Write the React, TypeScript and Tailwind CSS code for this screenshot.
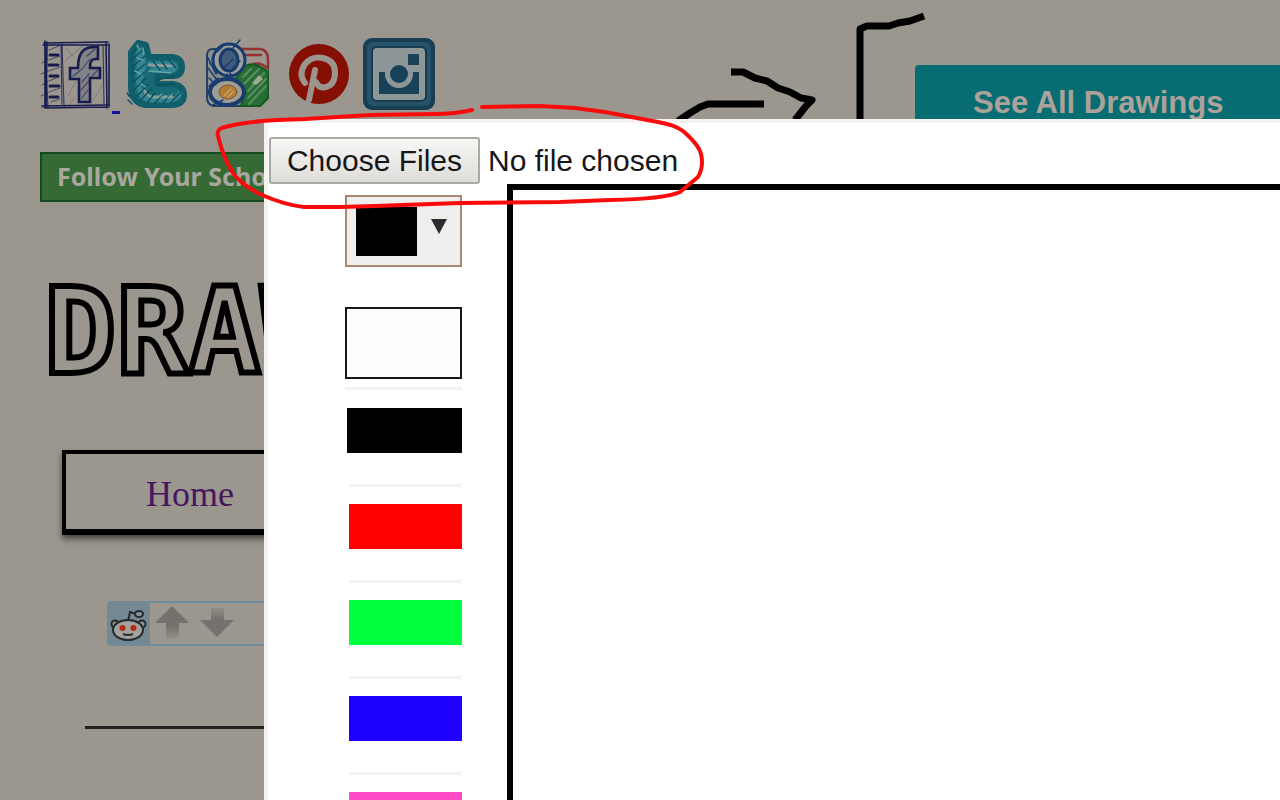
import { useRef, useState } from "react";

function FacebookSketch() {
  return (
    <svg viewBox="0 0 72 72" className="h-[72px] w-[72px]" fill="none" stroke="#171c4f" strokeLinecap="round">
      <path d="M4 5 68 4M3 7 69 7M5 3 5 70M7 4 6 69M2 68 68 67M5 70 67 69M66 4 67 70M69 6 69 69" strokeWidth="1.6" />
      <path d="M5 6 8 70M22 6 24 68M21 8 22 66M63 8 64 66" strokeWidth="1.1" opacity=".8" />
      <path d="M10 17h8M9 27h9M10 38h8M10 48h9M10 59h8" strokeWidth="3" />
      <path d="M2 25l6-4M1 36l7-3M2 47l6-4M1 58l7-3M2 70l6-4M9 12l10-4M9 22l11-4M9 33l11-4M9 43l10-4M9 54l11-4M11 64l9-3" strokeWidth="1" opacity=".65" />
      <path d="M26 10 33 18M26 22 44 7M28 58 36 43M52 64 64 45M30 66l4-6" strokeWidth="1" opacity=".25" />
      <path d="M39 64V41H30V30h8c0-14 4-22 20-21v12c-7-1-8 3-8 9h10v10H50v24z" strokeWidth="2.6" fill="#838188" />
      <path d="M42 60l6-8M41 52l8-9M42 44l7-8M33 38l8-6M42 31l8-10M47 18l8-7M52 38l6-6" strokeWidth="1.2" opacity=".6" />
    </svg>
  );
}

function TwitterSketch() {
  return (
    <svg viewBox="0 0 62 72" className="h-[72px] w-[62px]" fill="none" strokeLinecap="round" strokeLinejoin="round">
      <path d="M5 14 12 5 20 7 23 19H46Q56 20 56 29T47 38H31Q29 44 34 46H47Q58 48 58 57T47 67H20Q6 65 5 50z" fill="#176a76" stroke="#125d6b" strokeWidth="6" />
      <path d="M13 10v40q2 11 12 12h20q8-2 8-6M24 26h22q6 3 1 6H27M15 15q5 12 0 24" stroke="#358590" strokeWidth="5" />
      <path d="M18 52q3 7 10 7h18M23 27l22 1" stroke="#8a9b98" strokeWidth="3" />
      <path d="M6 15l8-6M5 22l11-9M6 29l13-11M6 37l13-11M7 44l12-10M7 53l13-13M10 59l12-12M14 63l12-13M21 65l8-10M29 65l8-9M37 65l9-10M45 64l9-9M27 23l7 9M35 22l6 9M43 22l7 8M31 42l17-4M30 47l18-1M6 66l-4-4M4 59l-3-4" stroke="#0a5060" strokeWidth="1.4" />
      <path d="M11 7l2 4M17 10l1 6M11 20l6 2M9 33l6 3M15 46l5 3M23 33l22 2M32 60l4-4M42 60l4-4" stroke="#62a4a8" strokeWidth="1.4" />
    </svg>
  );
}

function GoogleSketch() {
  return (
    <svg viewBox="0 0 66 72" className="h-[72px] w-[66px]" fill="none" strokeLinecap="round">
      <path d="M8 11H55q8 2 8 9V60l-8 8H8q-6-2-6-8V16q1-5 6-5z" fill="#89908e" stroke="#263f63" strokeWidth="2" />
      <path d="M38 12h20q5 2 5 9v14L50 26 38 26z" fill="#9b958e" />
      <path d="M36 11h20q7 2 7 11v8M38 17h18M48 26q8-2 14 4" stroke="#942f32" strokeWidth="2.4" />
      <path d="M37 30q12-9 26 4v26l-8 8H36l4-14-9-14z" fill="#276d36" stroke="#125c24" strokeWidth="2" />
      <path d="M38 39l8-8M38 47l16-16M43 53l16-18M43 60l18-19M44 66l17-18" stroke="#5c8d60" strokeWidth="2" />
      <path d="M47 45 54 37 58 41 51 47z" fill="#9cab94" />
      <ellipse cx="24" cy="22" rx="16" ry="16" fill="#9b9e9d" stroke="#153b70" strokeWidth="3" />
      <ellipse cx="24" cy="22" rx="9" ry="11" fill="#415c7a" stroke="#183a68" strokeWidth="3" />
      <ellipse cx="22" cy="54" rx="17" ry="13" fill="#a09d92" stroke="#183c6e" strokeWidth="4" />
      <ellipse cx="23" cy="54" rx="9" ry="7" fill="#b17b33" stroke="#765b36" strokeWidth="1" />
      <path d="M22 36l8 8M25 35l6 8M2 18l9 18M3 30l9 12M4 48l9-8M5 25l7 10M28 10l7-8M8 67l10-5M15 19l7-8M19 30l9-9M28 30l7-7M12 14l6-6M4 40l7 7M6 61l9 6" stroke="#173c72" strokeWidth="1.5" />
      <path d="M19 58l7-7M23 59l6-6" stroke="#d0a464" strokeWidth="1.4" />
    </svg>
  );
}

function PinterestLogo() {
  return (
    <svg viewBox="0 0 62 62" className="h-[62px] w-[62px]" fill="none" stroke="#9c958d" strokeLinecap="round">
      <circle cx="31" cy="31" r="30" fill="#860f04" stroke="none" />
      <path d="M17 40Q10 31 17 21 24 13 35 15 47 18 47 29 47 42 38 44 31 46 28 39" strokeWidth="6" />
      <path d="M27 27 21 57" strokeWidth="6" />
    </svg>
  );
}

function InstagramLogo() {
  return (
    <svg viewBox="0 0 72 72" className="h-[72px] w-[72px]">
      <rect width="72" height="72" rx="9" fill="#173e53" />
      <rect x="4" y="4" width="64" height="64" rx="6" fill="#24536b" />
      <rect x="9" y="9" width="54" height="54" rx="5" fill="#8d9798" stroke="#183c4e" strokeWidth="2" />
      <path d="M16 34h40v22H16z" fill="#174258" />
      <circle cx="36" cy="36" r="14" fill="#8d9798" />
      <circle cx="36" cy="36" r="9" fill="#174258" />
      <rect x="45" y="16" width="11" height="11" fill="#174258" />
    </svg>
  );
}

function Doodle() {
  return (
    <svg viewBox="0 0 260 124" className="absolute left-[670px] top-0 h-[124px] w-[260px]" fill="none" stroke="#000" strokeWidth="7" strokeLinejoin="round">
      <path d="M8 121 20 113 30 107 38 104H94" />
      <path d="M61 72H73L85 78 97 81 108 88 120 92 131 98 142 100 136 106 125 120" />
      <path d="M190 122V29L197 26H219L228 23 240 21 254 16" />
    </svg>
  );
}

function RedditAlien() {
  return (
    <svg viewBox="0 0 40 40" className="h-10 w-10" fill="none" stroke="#262b2e" strokeWidth="2">
      <path d="M19 17 21 8 28 10" />
      <ellipse cx="30" cy="10" rx="4" ry="3" fill="#899397" />
      <circle cx="6" cy="20" r="3.5" fill="#899397" />
      <circle cx="33" cy="20" r="3.5" fill="#899397" />
      <ellipse cx="19" cy="26" rx="15" ry="10" fill="#a4a29c" />
      <circle cx="13.500" cy="24" r="3" fill="#b32b10" stroke="none" />
      <circle cx="24.500" cy="24" r="3" fill="#b32b10" stroke="none" />
      <path d="M14 30q5 2 10 0" />
    </svg>
  );
}

function VoteArrow({ down = false }: { down?: boolean }) {
  const id = down ? "fade-down" : "fade-up";
  return (
    <svg viewBox="0 0 36 36" className="h-9 w-9">
      <defs>
        <linearGradient id={id} x1="0" y1="0" x2="0" y2="1">
          <stop offset={down ? "0" : ".6"} stopColor={down ? "#918e87" : "#73726d"} />
          <stop offset={down ? ".4" : "1"} stopColor={down ? "#73726d" : "#918e87"} />
        </linearGradient>
      </defs>
      <path d={down ? "M12 2h13v12h10L18 31 1 14h11z" : "M18 0 35 17H25v15H12V17H1z"} fill={`url(#${id})`} />
    </svg>
  );
}

const swatches = [
  { name: "Red", fill: "bg-[#ff0000]" },
  { name: "Green", fill: "bg-[#00ff3c]" },
  { name: "Blue", fill: "bg-[#1d00ff]" },
  { name: "Pink", fill: "bg-[#ff4bc8]" },
];

export default function App() {
  const fileRef = useRef<HTMLInputElement>(null);
  const [fileName, setFileName] = useState("No file chosen");

  return (
    <div className="relative h-screen overflow-hidden bg-[#9b978f] font-['Liberation_Sans',sans-serif]">
      <header className="flex items-start">
        <nav className="flex w-[915px] shrink-0 items-center pl-10 pt-[38px]" aria-label="Social">
          <a href="#facebook" aria-label="Facebook"><FacebookSketch /></a>
          <span className="mt-1 h-[3px] w-2 translate-y-9 bg-[#10109c]" />
          <a href="#twitter" aria-label="Twitter" className="ml-[6px]"><TwitterSketch /></a>
          <a href="#google" aria-label="Google" className="ml-[17px]"><GoogleSketch /></a>
          <a href="#pinterest" aria-label="Pinterest" className="ml-[17px]"><PinterestLogo /></a>
          <a href="#instagram" aria-label="Instagram" className="ml-[13px]"><InstagramLogo /></a>
        </nav>
        <a href="#drawings" className="mt-[65px] h-[87px] flex-1 whitespace-nowrap rounded-tl bg-[#076d73] pl-[58px] pt-5 text-[31px] font-bold leading-9 text-[#aca299]">
          See All Drawings
        </a>
      </header>
      <Doodle />

      <main>
        <a href="#follow" className="ml-10 flex h-[50px] w-80 items-center whitespace-nowrap border-2 border-[#124b20] bg-[#356a35] pl-[15px] font-['Noto_Sans',sans-serif] text-[25px] font-bold text-[#aaa79f]">
          Follow Your School
        </a>
        <h1 className="ml-[44px] mt-[70px] h-[120px] whitespace-nowrap font-['DejaVu_Sans_Mono',monospace] text-[120px] font-bold leading-[120px] text-transparent [-webkit-text-stroke:6px_#000]">
          DRAW
        </h1>
        <nav className="ml-[62px] mt-[58px] flex h-[85px] w-96 items-center border-x-4 border-b-[6px] border-t-4 border-black pl-20 pt-1 shadow-[0_4px_6px_#0008]">
          <a href="#home" className="font-['Liberation_Serif',serif] text-[36px] text-[#46165e]">Home</a>
        </nav>
        <div className="ml-[107px] mt-[66px] flex h-[45px] w-60 items-center rounded border-2 border-[#728b98]">
          <span className="flex h-full w-[41px] items-center bg-[#758995]"><RedditAlien /></span>
          <button type="button" aria-label="Upvote" className="ml-1"><VoteArrow /></button>
          <button type="button" aria-label="Downvote" className="ml-[9px]"><VoteArrow down /></button>
        </div>
        <hr className="ml-[85px] mt-20 w-96 border-t-[3px] border-[#20201e]" />
      </main>

      <section role="dialog" aria-label="Drawing board" className="absolute bottom-0 left-[264px] right-0 top-[119px] flex flex-col overflow-hidden rounded-tl border-l-4 border-t-4 border-[#f4f3f1] bg-white">
        <div className="flex shrink-0 items-center pt-[14px]">
          <button type="button" onClick={() => fileRef.current?.click()} className="ml-px h-[47px] w-[211px] whitespace-nowrap rounded-[3px] border-2 border-[#aaa9a3] bg-linear-to-b from-[#f7f7f6] to-[#deddd9] text-[30px] leading-10 text-[#171719]">
            Choose Files
          </button>
          <input ref={fileRef} type="file" multiple aria-label="Choose files" className="hidden" onChange={(e) => setFileName(e.target.files?.[0]?.name ?? "No file chosen")} />
          <span className="ml-2 text-[30px] leading-10 text-[#171719]">{fileName}</span>
        </div>
        <div className="flex min-h-0 flex-1">
          <div className="flex w-[239px] shrink-0 flex-col items-end overflow-hidden pr-[45px] pt-[11px]">
            <button type="button" aria-label="Pick a colour" aria-haspopup="listbox" className="flex h-[72px] w-[117px] shrink-0 items-center gap-[14px] border-2 border-[#a98772] bg-[#efeeec] pl-[9px]">
              <span className="h-[49px] w-[61px] bg-black" />
              <svg viewBox="0 0 16 16" className="-mt-2 h-4 w-4"><path d="M0 0h16L8 15z" fill="#292d31" /></svg>
            </button>
            <button type="button" aria-label="White" className="mt-10 h-[72px] w-[117px] shrink-0 border-2 border-[#151617] bg-[#fefdfc]" />
            <div className="mt-2 h-[3px] w-[117px] shrink-0 bg-[#f3f3f1]" />
            <button type="button" aria-label="Black" className="mt-[18px] h-[45px] w-[115px] shrink-0 bg-black" />
            {swatches.map((s) => (
              <div key={s.name} className="flex w-[113px] shrink-0 flex-col pt-[31px]">
                <div className="h-[3px] bg-[#f3f3f3]" />
                <button type="button" aria-label={s.name} className={`mt-[17px] h-[45px] ${s.fill}`} />
              </div>
            ))}
          </div>
          <div className="flex-1 border-l-[6px] border-t-[6px] border-black" />
        </div>
      </section>

      <svg viewBox="0 0 500 120" className="pointer-events-none absolute left-[210px] top-[95px] h-[120px] w-[500px]" fill="none" stroke="#fa0b0b" strokeWidth="4" strokeLinejoin="round" strokeLinecap="round">
        <path d="M262 15Q245 19 225 19L160 20 95 24Q40 25 15 32 6 34 8 41 14 66 25 81 38 94 52 100 75 110 94 112L130 112 165 111 250 108 350 107 400 105Q455 104 470 97L488 82Q494 72 491 59 489 50 473 36 465 30 448 27L395 17 365 13 330 11 272 12" />
      </svg>
    </div>
  );
}
